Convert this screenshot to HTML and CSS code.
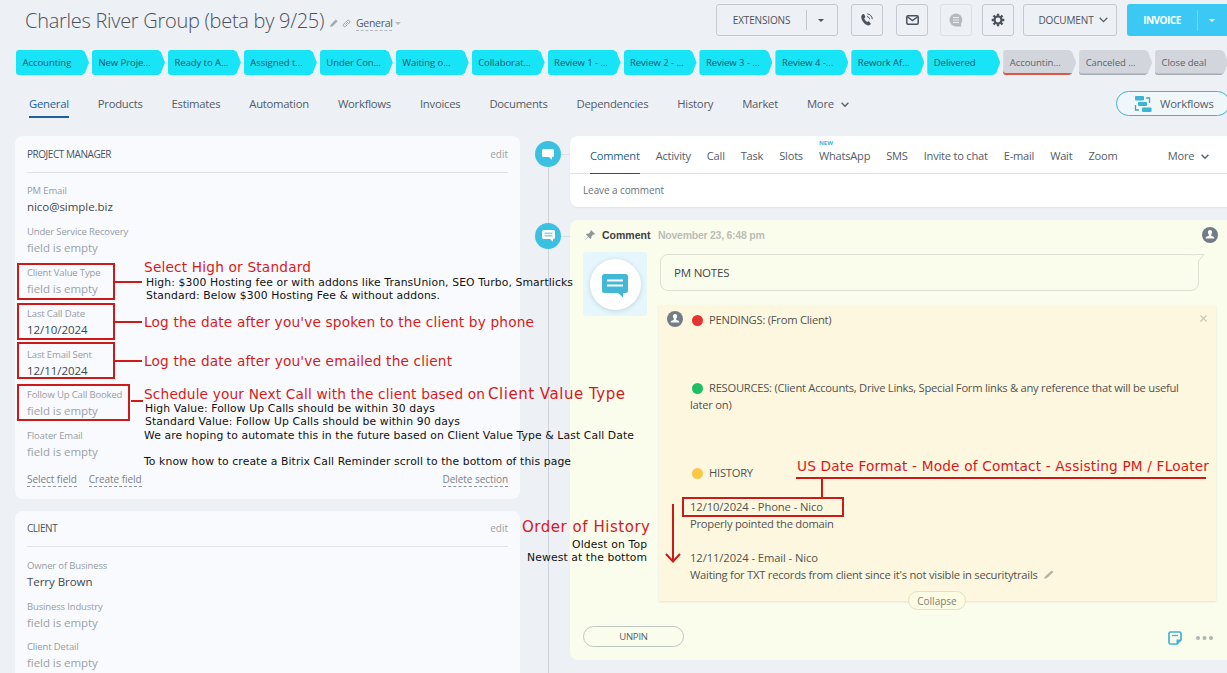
FILE: index.html
```
<!DOCTYPE html>
<html lang="en">
<head>
    <meta charset="UTF-8">
    <meta name="viewport" content="width=device-width, initial-scale=1.0">
    <title>Charles River Group (beta by 9/25)</title>
    <link rel="stylesheet" href="styles.css">
</head>
<body>
    <header class="header">
        <h1>Charles River Group (beta by 9/25)</h1>
        <svg class="title-icon" width="8" height="8" viewBox="0 0 8 8"><path d="M0 8l.8-2.6L5.8.4l1.8 1.8-5 5z" fill="#a3a9b0"/></svg>
        <svg class="title-icon link" width="9" height="9" viewBox="0 0 9 9" fill="none" stroke="#9aa0a8"><path d="M3.3 5.7l2.6-2.6M3.6 3.3l1.8-1.8a1.5 1.5 0 0 1 2.1 2.1L5.7 5.4M5.3 5.7L3.6 7.4a1.5 1.5 0 0 1-2.1-2.1l1.8-1.7"/></svg>
        <span class="category">General</span>
        <span class="caret small"></span>
        <div class="toolbar">
            <button class="btn extensions"><span>EXTENSIONS</span><i class="caret"></i></button>
            <button class="btn icon phone"><svg width="14" height="14" viewBox="0 0 14 14"><path d="M3.1 1.1c.6-.3 1 0 1.3.6l.8 1.8c.2.5 0 .9-.4 1.2l-.6.5c.6 1.6 1.6 2.9 3.1 3.8l.8-.5c.5-.3.9-.2 1.2.2l1.2 1.5c.4.5.3 1-.2 1.3-1.4 1.2-3 1.1-4.6.1C3.6 10.1 1.7 7.6 1.3 4.6 1.1 3 1.8 1.7 3.1 1.1z" fill="#4b535e"/><path d="M7 3.6c1.4.1 2.5 1.2 2.7 2.7M7.3.9c2.7.2 4.8 2.4 5 5.2" fill="none" stroke="#4b535e"/></svg></button>
            <button class="btn icon mail"><svg width="13" height="10" viewBox="0 0 13 10" fill="none" stroke="#4b535e" stroke-width="1.5"><rect x=".8" y=".8" width="11.4" height="8.4" rx="1.2"/><path d="M1 1.5l5.5 4 5.5-4"/></svg></button>
            <button class="btn icon chat"><svg width="14" height="14" viewBox="0 0 14 14"><path d="M7 .5a6.3 6.3 0 0 1 6.3 6.3c0 1.4-.5 2.7-1.2 3.7v3H7A6.5 6.5 0 0 1 7 .5z" fill="#b4b9c0"/><path d="M4 4.5h6M4 7h6M4 9.5h6" stroke="#edf1f5"/></svg></button>
            <button class="btn icon gear"><svg width="14" height="14" viewBox="0 0 14 14"><g stroke="#4b535e" stroke-width="2.4"><path d="M7 .7v12.6M.7 7h12.6M2.5 2.5l9 9M11.5 2.5l-9 9"/></g><circle cx="7" cy="7" r="4.5" fill="#4b535e"/><circle cx="7" cy="7" r="2.4" fill="#eef1f6"/></svg></button>
            <button class="btn document">DOCUMENT <svg width="9" height="6" viewBox="0 0 9 6" fill="none" stroke="#59616b" stroke-width="1.3"><path d="M.7.8l3.8 3.8L8.3.8"/></svg></button>
            <button class="btn invoice"><span>INVOICE</span><i class="caret"></i></button>
        </div>
    </header>

    <ul class="stages">
        <li>Accounting</li>
        <li>New Proje...</li>
        <li>Ready to A...</li>
        <li>Assigned t...</li>
        <li>Under Con...</li>
        <li>Waiting o...</li>
        <li>Collaborat...</li>
        <li>Review 1 - ...</li>
        <li>Review 2 - ...</li>
        <li>Review 3 - ...</li>
        <li>Review 4 -...</li>
        <li>Rework Af...</li>
        <li>Delivered</li>
        <li class="off failed">Accountin...</li>
        <li class="off">Canceled ...</li>
        <li class="off">Close deal</li>
    </ul>

    <nav class="tabs">
        <a class="active">General</a>
        <a>Products</a>
        <a>Estimates</a>
        <a>Automation</a>
        <a>Workflows</a>
        <a>Invoices</a>
        <a>Documents</a>
        <a>Dependencies</a>
        <a>History</a>
        <a>Market</a>
        <a>More <svg width="8" height="6" viewBox="0 0 8 6" fill="none" stroke="#59616b" stroke-width="1.4"><path d="M.6.8L4 4.3 7.4.8"/></svg></a>
        <button class="workflows"><svg width="18" height="16" viewBox="0 0 18 16"><g fill="#3cb4d6"><rect x="1" y="0" width="9" height="4.5" rx="1"/><rect x="4" y="6" width="9" height="4" rx="1"/><rect x="8" y="11.5" width="9.5" height="4.5" rx="1"/></g><path d="M12 2h3.5v5M5 14H1.5V9" fill="none" stroke="#4d9fb8" stroke-width="1.3"/></svg>Workflows</button>
    </nav>

    <main class="content">
        <aside class="sidebar">
            <section class="panel">
                <div class="panel-head"><h2>PROJECT MANAGER</h2><a>edit</a></div>
                <dl>
                    <dt>PM Email</dt><dd class="filled">nico@simple.biz</dd>
                    <dt>Under Service Recovery</dt><dd>field is empty</dd>
                    <dt>Client Value Type</dt><dd>field is empty</dd>
                    <dt>Last Call Date</dt><dd class="filled">12/10/2024</dd>
                    <dt>Last Email Sent</dt><dd class="filled">12/11/2024</dd>
                    <dt>Follow Up Call Booked</dt><dd>field is empty</dd>
                    <dt>Floater Email</dt><dd>field is empty</dd>
                </dl>
                <div class="panel-links"><a>Select field</a><a>Create field</a><a class="right">Delete section</a></div>
            </section>
            <section class="panel client">
                <div class="panel-head"><h2>CLIENT</h2><a>edit</a></div>
                <dl>
                    <dt>Owner of Business</dt><dd class="filled">Terry Brown</dd>
                    <dt>Business Industry</dt><dd>field is empty</dd>
                    <dt>Client Detail</dt><dd>field is empty</dd>
                </dl>
            </section>
        </aside>

        <div class="timeline">
            <span class="dot"><svg width="12" height="11" viewBox="0 0 12 11"><path d="M1.5 0h9Q12 0 12 1.5v5Q12 8 10.5 8H10v2.8L7 8H1.5Q0 8 0 6.5v-5Q0 0 1.5 0z" fill="#fff"/></svg></span>
            <span class="dot second"><svg width="13" height="12" viewBox="0 0 13 12"><path d="M1.5 0h10Q13 0 13 1.5v6Q13 9 11.5 9H11v2.8L8 9H1.5Q0 9 0 7.5v-6Q0 0 1.5 0z" fill="#fff"/><path d="M2.5 3.2h8M2.5 5.8h8" stroke="#3bc0e2"/></svg></span>
        </div>

        <div class="feed">
            <section class="editor">
                <nav class="editor-tabs">
                    <a class="active">Comment</a>
                    <a>Activity</a>
                    <a>Call</a>
                    <a>Task</a>
                    <a>Slots</a>
                    <a class="new">WhatsApp</a>
                    <a>SMS</a>
                    <a>Invite to chat</a>
                    <a>E-mail</a>
                    <a>Wait</a>
                    <a>Zoom</a>
                    <a class="more">More <svg width="8" height="6" viewBox="0 0 8 6" fill="none" stroke="#59616b" stroke-width="1.4"><path d="M.6.8L4 4.3 7.4.8"/></svg></a>
                </nav>
                <p>Leave a comment</p>
            </section>

            <section class="pinned">
                <div class="pinned-head">
                    <svg width="10" height="10" viewBox="0 0 10 10"><path d="M6 0l4 4-1 .7-.8-.2L6.3 6.4l.1 1.7-.9.9-2.1-2.1L.4 9.8l-.2-.2 2.9-3L1 4.5l.9-.9 1.7.1 1.9-1.9L5.3 1z" fill="#8f959c"/></svg>
                    <strong>Comment</strong>
                    <time>November 23, 6:48 pm</time>
                    <svg class="avatar" width="16" height="16" viewBox="0 0 16 16"><circle cx="8" cy="8" r="8" fill="#737c86"/><path d="M8 3c1.5 0 2.2 1 2.1 2.3 0 1-.4 1.8-.9 2.3v1.1l2.3 1.1c.6.3.8.8.8 1.7H3.7c0-.9.2-1.4.8-1.7l2.3-1.1V7.6c-.5-.5-.9-1.3-.9-2.3C5.8 4 6.5 3 8 3z" fill="#fff"/></svg>
                </div>
                <div class="pinned-body">
                    <div class="badge"><span><svg width="26" height="24" viewBox="0 0 26 24"><path d="M2.5 0h21Q26 0 26 2.5v14q0 2.5-2.5 2.5H21v4.5L16 19H2.5Q0 19 0 16.5v-14Q0 0 2.5 0z" fill="#43b8d6"/><path d="M5 6.5h16M5 11.5h16" stroke="#fff" stroke-width="2"/></svg></span></div>
                    <div class="notes">
                        <div class="bubble">PM NOTES<svg width="11" height="12" viewBox="0 0 11 12"><path d="M0 1H10L5 7v5H0z" fill="#fbfdec"/><path d="M0 .5H10L4.5 7v5" fill="none" stroke="#dde0d3"/></svg></div>
                        <div class="note">
                            <svg class="avatar" width="16" height="16" viewBox="0 0 16 16"><circle cx="8" cy="8" r="8" fill="#737c86"/><path d="M8 3c1.5 0 2.2 1 2.1 2.3 0 1-.4 1.8-.9 2.3v1.1l2.3 1.1c.6.3.8.8.8 1.7H3.7c0-.9.2-1.4.8-1.7l2.3-1.1V7.6c-.5-.5-.9-1.3-.9-2.3C5.8 4 6.5 3 8 3z" fill="#fff"/></svg>
                            <div class="note-text">
                                <p><i class="mark red"></i>PENDINGS: (From Client)</p>
                                <p class="gap-3"><i class="mark green"></i><span class="resources">RESOURCES: (Client Accounts, Drive Links, Special Form links &amp; any reference that will be useful</span><br>later on)</p>
                                <p class="gap-3"><i class="mark yellow"></i>HISTORY</p>
                                <p class="gap-1"><span class="date">12/10/2024 - Phone - Nico</span><br>Properly pointed the domain</p>
                                <p class="gap-1"><span class="date">12/11/2024 - Email - Nico</span><br>Waiting for TXT records from client since it's not visible in securitytrails <svg width="10" height="9" viewBox="0 0 10 9"><path d="M0 9l1-2.5L7.5.5 9.5 2 3 8z" fill="#b5b4a6"/></svg></p>
                            </div>
                            <svg class="close" width="7" height="7" viewBox="0 0 7 7" stroke="#c9c7ba" stroke-width="1.2"><path d="M.5.5l6 6M6.5.5l-6 6"/></svg>
                            <button class="collapse">Collapse</button>
                        </div>
                    </div>
                </div>
                <div class="pinned-foot">
                    <button class="unpin">UNPIN</button>
                    <svg width="14" height="14" viewBox="0 0 14 14"><path d="M2.5 1h9Q13 1 13 2.5V9l-4 4H2.5Q1 13 1 11.5v-9Q1 1 2.5 1z" fill="none" stroke="#3fb3d2" stroke-width="1.7"/><path d="M4 4.5h6" stroke="#3fb3d2" stroke-width="1.3"/><path d="M13.5 8.5h-5v5z" fill="#3fb3d2"/></svg>
                    <svg width="17" height="4" viewBox="0 0 17 4" fill="#aeb3b3"><circle cx="2" cy="2" r="2"/><circle cx="8.5" cy="2" r="2"/><circle cx="15" cy="2" r="2"/></svg>
                </div>
            </section>
            <section class="next-item"></section>
        </div>
    </main>

    <!-- training annotations drawn over the page -->
    <svg class="annotations" width="1227" height="673" viewBox="0 0 1227 673">
        <g class="lines">
            <rect x="18" y="264" width="96" height="35"/>
            <rect x="18" y="304" width="96" height="35"/>
            <rect x="18" y="343" width="96" height="35"/>
            <rect x="18" y="385" width="111" height="35"/>
            <path d="M115 282h27M115 322h27M115 361h27M131 401h12"/>
            <rect x="683" y="498" width="160" height="18"/>
            <path d="M796 478h410M822 478v20M673 504v57M666 554l7 7.5 7-7.5"/>
        </g>
        <g class="red">
            <text x="144" y="272" textLength="167">Select High or Standard</text>
            <text x="144" y="327" textLength="390">Log the date after you've spoken to the client by phone</text>
            <text x="144" y="366" textLength="308">Log the date after you've emailed the client</text>
            <text x="144" y="399" textLength="341">Schedule your Next Call with the client based on</text>
            <text class="big" x="488" y="399" textLength="137">Client Value Type</text>
            <text class="big" x="522" y="532" textLength="128">Order of History</text>
            <text x="797" y="471" textLength="412">US Date Format - Mode of Comtact - Assisting PM / FLoater</text>
        </g>
        <g class="black">
            <text x="146" y="286" textLength="427">High: $300 Hosting fee or with addons like TransUnion, SEO Turbo, Smartlicks</text>
            <text x="146" y="299" textLength="294">Standard: Below $300 Hosting Fee &amp; without addons.</text>
            <text x="145" y="412" textLength="290">High Value: Follow Up Calls should be within 30 days</text>
            <text x="145" y="425" textLength="315">Standard Value: Follow Up Calls should be within 90 days</text>
            <text x="144" y="439" textLength="490">We are hoping to automate this in the future based on Client Value Type &amp; Last Call Date</text>
            <text x="144" y="465" textLength="427">To know how to create a Bitrix Call Reminder scroll to the bottom of this page</text>
            <text x="572" y="548" textLength="75">Oldest on Top</text>
            <text x="527" y="561" textLength="120">Newest at the bottom</text>
        </g>
    </svg>
</body>
</html>
```
FILE: styles.css
```
* {
    box-sizing: border-box;
}
body {
    margin: 0;
    width: 1227px;
    height: 673px;
    overflow: hidden;
    position: relative;
    background-color: #edf0f5;
    font-family: "Open Sans", "Noto Sans", sans-serif;
    font-size: 12px;
    color: #535c69;
}
h1, h2, p, ul, dl, dd {
    margin: 0;
    padding: 0;
    font-weight: 400;
}
button {
    font-family: inherit;
    color: inherit;
    padding: 0;
    background: none;
}
svg {
    flex: none;
}

/* header */
.header {
    display: flex;
    height: 50px;
    padding: 4px 0 0 25px;
}
.header h1 {
    font-size: 20px;
    font-weight: 300;
    line-height: 34px;
    white-space: nowrap;
    width: 305px;
    color: #4a515c;
    letter-spacing: -0.28px;
}
.title-icon {
    margin-top: 15px;
}
.link {
    margin: 15px 0 0 4px;
}
.category {
    font-size: 10.5px;
    line-height: 14px;
    height: 15px;
    margin: 12px 0 0 5px;
    width: 36px;
    letter-spacing: -0.3px;
    border-bottom: 1px dashed #b3b9c1;
}
.caret {
    width: 0;
    height: 0;
    border: 3.5px solid transparent;
    border-top-color: currentColor;
    border-bottom: 0;
}
.caret.small {
    border-width: 3px;
    border-bottom: 0;
    color: #b7bcc4;
    margin: 18px 0 0 3px;
}
.toolbar {
    display: flex;
    margin-left: auto;
    width: 511px;
}
.btn {
    height: 32px;
    border: 1px solid #c3c9d1;
    border-radius: 3px;
    font-size: 10px;
    letter-spacing: -0.15px;
    display: flex;
    align-items: center;
    justify-content: center;
    flex: none;
    color: #4b535e;
}
.extensions {
    width: 122px;
    justify-content: flex-start;
}
.extensions span {
    width: 90px;
    text-align: center;
    line-height: 20px;
    border-right: 1px solid #c3c9d1;
    margin-right: 11px;
}
.icon {
    width: 32px;
}
.phone, .mail {
    margin-left: 13px;
}
.chat {
    margin-left: 12px;
    border-color: #dce0e6;
}
.gear {
    margin-left: 10px;
}
.document {
    width: 94px;
    margin-left: 9px;
    padding-left: 6px;
    gap: 5px;
}
.invoice {
    width: 106px;
    margin-left: 10px;
    background-color: #3bc8f5;
    border: 0;
    color: white;
    font-weight: 700;
    letter-spacing: -0.5px;
    justify-content: flex-start;
}
.invoice span {
    width: 71px;
    text-align: center;
    line-height: 21px;
    border-right: 1px solid #6cd7f8;
    margin-right: 11px;
}

/* stages */
.stages {
    display: flex;
    gap: 2.95px;
    list-style: none;
    padding-left: 16px;
    height: 25px;
}
.stages li {
    flex: none;
    width: 73px;
    padding-left: 6.5px;
    font-size: 9.5px;
    line-height: 25px;
    letter-spacing: -0.05px;
    color: #12586a;
    white-space: nowrap;
    background-color: #17e5f7;
    border-radius: 3px 0 0 3px;
    clip-path: polygon(0 0, 66px 0, 69px 2px, 73px 12.5px, 69px 23px, 66px 25px, 0 25px);
}
.stages .off {
    background-color: #d2d6dc;
    color: #5b636e;
    box-shadow: inset 0 -1.5px #a6abb3;
}
.stages .failed {
    box-shadow: inset 0 -2px #e0553f;
}

/* main tabs */
.tabs {
    display: flex;
    height: 61px;
    padding: 16px 0 0 29px;
    gap: 29px;
    white-space: nowrap;
}
.tabs a {
    height: 27px;
    line-height: 26px;
    font-size: 11.3px;
    letter-spacing: -0.26px;
}
.tabs a svg {
    margin-left: 4px;
}
.tabs .active {
    color: #1b5f9e;
    border-bottom: 2px solid #1d5f97;
}
.workflows {
    margin-left: auto;
    flex: none;
    width: 114px;
    height: 25px;
    margin-right: -3px;
    border: 1px solid #45b4d6;
    border-radius: 13px;
    background-color: #f0f7fb;
    font-size: 11.3px;
    letter-spacing: -0.2px;
    display: flex;
    align-items: center;
    gap: 8px;
    padding-left: 17px;
}

/* two columns with the timeline between them */
.content {
    display: grid;
    grid-template-columns: 505px 50px 657px;
    padding-left: 15px;
    height: 537px;
}
.panel {
    height: 363px;
    padding: 0 12px;
    border-radius: 8px;
    background-color: #f9fafd;
}
.client {
    margin-top: 12px;
    height: 180px;
}
.panel-head {
    display: flex;
    justify-content: space-between;
    height: 37px;
    line-height: 36px;
    border-bottom: 1px solid #dfe3e7;
    margin-bottom: 10px;
}
.panel-head h2 {
    font-size: 10px;
    letter-spacing: -0.45px;
    line-height: inherit;
    color: #4b535e;
}
.panel-head a {
    font-size: 10px;
    letter-spacing: 0;
    color: #9ba1a8;
}
.client .panel-head {
    height: 36px;
    line-height: 34px;
    margin-bottom: 11px;
}
dt {
    font-size: 9.5px;
    line-height: 16px;
    letter-spacing: -0.15px;
    color: #969ca5;
}
dd {
    font-size: 11.5px;
    line-height: 16px;
    margin-bottom: 8.9px;
    letter-spacing: -0.05px;
    color: #9ba1a9;
}
.client dd {
    margin-bottom: 8.5px;
}
dd.filled {
    color: #3f4751;
}
.panel-links {
    display: flex;
    gap: 12px;
    padding-top: 4px;
    font-size: 10px;
    line-height: 13px;
    letter-spacing: -0.05px;
    color: #7a818a;
}
.panel-links a {
    border-bottom: 1px dashed #9097a0;
}
.panel-links .right {
    margin-left: auto;
}

.timeline {
    padding: 5px 0 0 15px;
    background: linear-gradient(#ced4db, #ced4db) 28px 18px / 1px 100% no-repeat,
        linear-gradient(#d9dee3, #d9dee3) 28px 18px / 22px 1px no-repeat,
        linear-gradient(#d9dee3, #d9dee3) 28px 100px / 22px 1px no-repeat;
}
.dot {
    display: flex;
    align-items: center;
    justify-content: center;
    width: 26px;
    height: 26px;
    border-radius: 50%;
    background-color: #3bc0e2;
}
.second {
    margin-top: 56px;
}

/* comment editor */
.editor {
    height: 71px;
    border-radius: 8px 0 0 8px;
    background-color: white;
    box-shadow: 0 1px 1px #dfe4e8;
}
.editor-tabs {
    display: flex;
    gap: 16px;
    height: 38px;
    padding: 0 18px 0 20px;
    border-bottom: 1px solid #dfe2e6;
    line-height: 40px;
    font-size: 11.1px;
    letter-spacing: -0.22px;
    white-space: nowrap;
}
.editor-tabs a {
    height: 38px;
    position: relative;
}
.editor-tabs .active {
    color: #1b5f87;
    border-bottom: 1px solid #175a6b;
}
.editor-tabs .new::before {
    content: "NEW";
    position: absolute;
    top: 4px;
    left: 0;
    font-size: 6px;
    font-weight: 700;
    line-height: 7px;
    letter-spacing: 0;
    color: #3bb5dc;
}
.editor-tabs .more {
    margin-left: auto;
}
.editor-tabs svg {
    margin-left: 4px;
}
.editor p {
    padding-left: 13px;
    font-size: 10px;
    line-height: 32px;
    letter-spacing: -0.1px;
    color: #6c737c;
}

/* pinned comment */
.pinned {
    margin-top: 13px;
    height: 440px;
    border-radius: 8px 0 0 8px;
    background-color: #fbfdec;
}
.pinned-head {
    display: flex;
    align-items: center;
    height: 31px;
    padding: 0 9px 1px 15px;
    font: 10.5px "Liberation Sans", Arial, sans-serif;
    color: #3a3e42;
}
.pinned-head strong {
    margin: 0 7px 1px;
    width: 49px;
}
.pinned-head time {
    margin-bottom: 1px;
    color: #babdb8;
    letter-spacing: -0.25px;
    font-weight: 700;
}
.pinned-head .avatar {
    margin-left: auto;
}
.pinned-body {
    display: flex;
    padding: 1px 11px 0 13px;
    height: 350px;
}
.badge {
    flex: none;
    width: 64px;
    height: 64px;
    border-radius: 4px;
    background-color: #e5f6fc;
    display: flex;
    align-items: center;
    justify-content: center;
}
.badge span {
    width: 51px;
    height: 51px;
    border-radius: 50%;
    background-color: white;
    box-shadow: 0 1px 4px rgba(60, 120, 140, 0.25);
    display: flex;
    align-items: center;
    justify-content: center;
    padding-top: 4px;
}
.notes {
    margin-left: 12px;
    flex: 1;
    min-width: 0;
}
.bubble {
    position: relative;
    width: 539px;
    height: 37px;
    margin: 2px 0 0 1px;
    padding-left: 13px;
    border: 1px solid #dde0d3;
    border-radius: 8px;
    line-height: 36px;
    font-size: 11.5px;
    letter-spacing: -0.2px;
    color: #3f454b;
}
.bubble svg {
    position: absolute;
    top: -1px;
    right: -7px;
}
.note {
    position: relative;
    display: flex;
    height: 296px;
    margin-top: 14px;
    padding: 6px 8px 0;
    background-color: #fef7e0;
    box-shadow: 0 1px 2px #e4e2cf;
}
.note-text {
    margin-left: 7px;
    line-height: 17px;
    font-size: 11.2px;
    letter-spacing: -0.24px;
    white-space: nowrap;
    color: #51534f;
}
.resources {
    letter-spacing: -0.26px;
}
.date {
    letter-spacing: -0.08px;
}
.gap-3 {
    margin-top: 51px;
}
.gap-1 {
    margin-top: 17px;
}
.mark {
    display: inline-block;
    width: 11px;
    height: 11px;
    margin: 0 6px 0 2px;
    border-radius: 50%;
    vertical-align: -2px;
}
.red.mark {
    background-color: #e2352f;
}
.green.mark {
    background-color: #1fbf65;
}
.yellow.mark {
    background-color: #fbc844;
}
.note-text svg {
    margin-left: 4px;
}
.close {
    position: absolute;
    right: 9px;
    top: 10px;
}
.collapse {
    position: absolute;
    left: 249px;
    bottom: -9px;
    width: 58px;
    height: 19px;
    border: 1px solid #e2e2c4;
    border-radius: 10px;
    background-color: #fcfbe3;
    font-size: 10px;
    line-height: 16px;
    color: #7d8078;
}
.pinned-foot {
    display: flex;
    align-items: center;
    gap: 14px;
    margin-top: 25px;
    padding: 0 14px 0 13px;
}
.pinned-foot svg {
    margin-top: 2px;
}
.unpin {
    width: 101px;
    height: 21px;
    margin-right: auto;
    border: 1px solid #bfc5c3;
    border-radius: 11px;
    font-size: 9.5px;
    letter-spacing: -0.2px;
    color: #535c69;
}
.next-item {
    height: 20px;
    margin-top: 13px;
    border-radius: 8px 0 0 0;
    background-color: white;
}

/* annotations */
.annotations {
    position: absolute;
    top: 0;
    left: 0;
    font-family: "DejaVu Sans", sans-serif;
}
.lines {
    fill: none;
    stroke: #cc1a18;
    stroke-width: 2;
}
.annotations .red {
    fill: #d61a1c;
    font-size: 13.7px;
}
.annotations .big {
    font-size: 15px;
}
.annotations .black {
    fill: #111;
    font-size: 10.8px;
}
```
